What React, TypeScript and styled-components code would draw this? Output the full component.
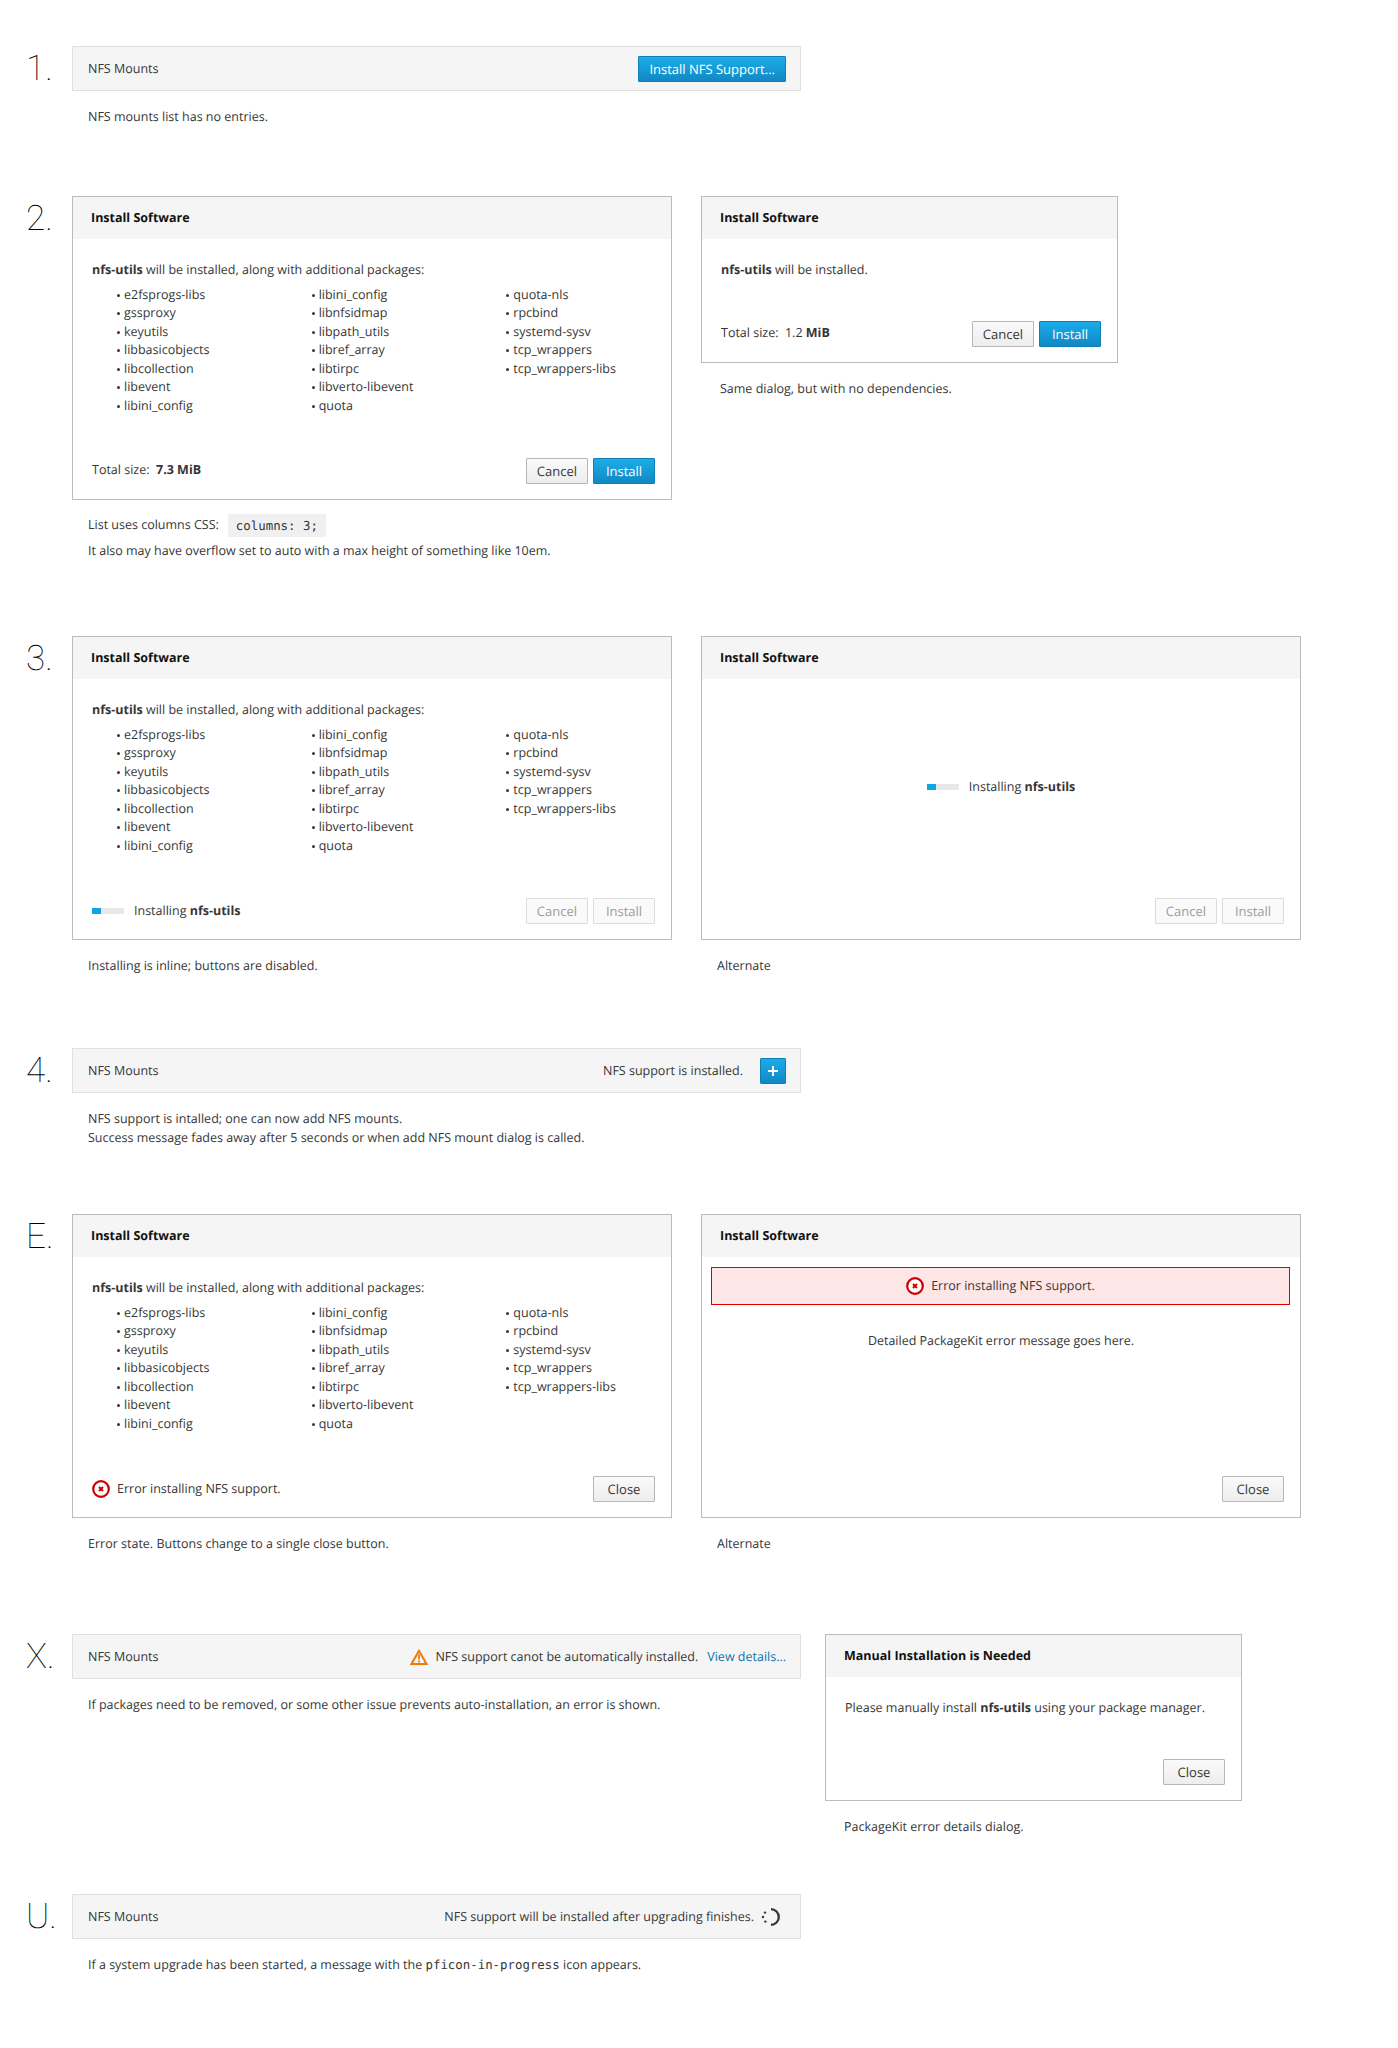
import React from "react";
import styled, { createGlobalStyle } from "styled-components";

const GlobalStyle = createGlobalStyle`
  html, body {
    margin: 0;
    padding: 0;
    background: #fff;
    color: #363636;
    font-family: "Open Sans", "Liberation Sans", sans-serif;
    font-size: 12.5px;
    line-height: 18.57px;
    text-rendering: geometricPrecision;
  }
`;

const PACKAGES = [
  "e2fsprogs-libs", "gssproxy", "keyutils", "libbasicobjects", "libcollection", "libevent", "libini_config",
  "libini_config", "libnfsidmap", "libpath_utils", "libref_array", "libtirpc", "libverto-libevent", "quota",
  "quota-nls", "rpcbind", "systemd-sysv", "tcp_wrappers", "tcp_wrappers-libs",
];

const ErrorIcon = () => (
  <svg width="18" height="18" viewBox="0 0 18 18" style={{ flex: "none" }}>
    <circle cx="9" cy="9" r="7.8" fill="#fff" stroke="#cc0000" strokeWidth="2.2" />
    <path d="M7 7l4 4M11 7l-4 4" stroke="#cc0000" strokeWidth="2" />
  </svg>
);

const WarningIcon = () => (
  <svg width="18" height="16" viewBox="0 0 18 16" style={{ flex: "none" }}>
    <path d="M9 1.8L1.5 15h15z" fill="none" stroke="#ec7a08" strokeWidth="2" strokeLinejoin="miter" />
    <path d="M9 5.6v5M9 11.6v1.8" stroke="#ec7a08" strokeWidth="1.8" />
  </svg>
);

const SpinnerIcon = () => (
  <svg width="19" height="18" viewBox="0 0 19 18" style={{ flex: "none", marginRight: 6 }}>
    <path d="M10 1.2A7.8 7.8 0 0 1 10 16.8" fill="none" stroke="#363636" strokeWidth="2.3" />
    <circle cx="4" cy="4.6" r="1.2" fill="#363636" />
    <circle cx="2" cy="9" r="1.2" fill="#363636" />
    <circle cx="4.4" cy="13.6" r="1.2" fill="#363636" />
  </svg>
);

const PlusIcon = () => (
  <svg width="12" height="12" viewBox="0 0 12 12">
    <path d="M6 1v10M1 6h10" stroke="#fff" strokeWidth="2" />
  </svg>
);

const Dialog = ({ width, height, title, children }: { width: number; height: number; title: string; children: React.ReactNode }) => (
  <DialogBox $width={width} $height={height}>
    <DialogHeader>{title}</DialogHeader>
    {children}
  </DialogBox>
);

const PackageBody = () => (
  <DialogBody>
    <p>
      <strong>nfs-utils</strong> will be installed, along with additional packages:
    </p>
    <PackageList>
      {PACKAGES.map((name, i) => (
        <li key={i}>{name}</li>
      ))}
    </PackageList>
  </DialogBody>
);

const Installing = () => (
  <InstallStatus>
    <ProgressTrack>
      <ProgressFill />
    </ProgressTrack>
    <span>
      Installing <strong>nfs-utils</strong>
    </span>
  </InstallStatus>
);

const Buttons = ({ disabled }: { disabled?: boolean }) => (
  <ButtonRow>
    <Button $disabled={disabled}>Cancel</Button>
    {disabled ? <Button $disabled>Install</Button> : <Button $primary>Install</Button>}
  </ButtonRow>
);

const App: React.FC = () => {
  return (
    <Page>
      <GlobalStyle />

      <Section $height={150}>
        <StepLabel>1.</StepLabel>
        <Column>
          <MountsBar>
            <BarTitle>NFS Mounts</BarTitle>
            <Button $primary>Install NFS Support...</Button>
          </MountsBar>
          <Note>NFS mounts list has no entries.</Note>
        </Column>
      </Section>

      <Section $height={440}>
        <StepLabel>2.</StepLabel>
        <Columns>
          <Column>
            <Dialog width={600} height={304} title="Install Software">
              <PackageBody />
              <DialogFooter>
                <FooterText>
                  Total size:&nbsp; <strong>7.3 MiB</strong>
                </FooterText>
                <Buttons />
              </DialogFooter>
            </Dialog>
            <Note>
              <CodeLine>
                List uses columns CSS: <CodeChip>columns: 3;</CodeChip>
              </CodeLine>
              It also may have overflow set to auto with a max height of something like 10em.
            </Note>
          </Column>
          <Column>
            <Dialog width={417} height={167} title="Install Software">
              <DialogBody>
                <p>
                  <strong>nfs-utils</strong> will be installed.
                </p>
              </DialogBody>
              <DialogFooter>
                <FooterText>
                  Total size:&nbsp; 1.2 <strong>MiB</strong>
                </FooterText>
                <Buttons />
              </DialogFooter>
            </Dialog>
            <Note $indent={19}>Same dialog, but with no dependencies.</Note>
          </Column>
        </Columns>
      </Section>

      <Section $height={412}>
        <StepLabel>3.</StepLabel>
        <Columns>
          <Column>
            <Dialog width={600} height={304} title="Install Software">
              <PackageBody />
              <DialogFooter>
                <Installing />
                <Buttons disabled />
              </DialogFooter>
            </Dialog>
            <Note>Installing is inline; buttons are disabled.</Note>
          </Column>
          <Column>
            <Dialog width={600} height={304} title="Install Software">
              <CenteredBody $top={99}>
                <Installing />
              </CenteredBody>
              <DialogFooter $end>
                <Buttons disabled />
              </DialogFooter>
            </Dialog>
            <Note>Alternate</Note>
          </Column>
        </Columns>
      </Section>

      <Section $height={166}>
        <StepLabel>4.</StepLabel>
        <Column>
          <MountsBar>
            <BarTitle>NFS Mounts</BarTitle>
            <BarStatus $gap={17}>
              NFS support is installed.
              <IconButton>
                <PlusIcon />
              </IconButton>
            </BarStatus>
          </MountsBar>
          <Note>
            NFS support is intalled; one can now add NFS mounts.
            <br />
            Success message fades away after 5 seconds or when add NFS mount dialog is called.
          </Note>
        </Column>
      </Section>

      <Section $height={420}>
        <StepLabel>E.</StepLabel>
        <Columns>
          <Column>
            <Dialog width={600} height={304} title="Install Software">
              <PackageBody />
              <DialogFooter>
                <InstallStatus $gap={7}>
                  <ErrorIcon />
                  Error installing NFS support.
                </InstallStatus>
                <Button>Close</Button>
              </DialogFooter>
            </Dialog>
            <Note>Error state. Buttons change to a single close button.</Note>
          </Column>
          <Column>
            <Dialog width={600} height={304} title="Install Software">
              <ErrorAlert>
                <ErrorIcon />
                Error installing NFS support.
              </ErrorAlert>
              <CenteredBody $top={27}>Detailed PackageKit error message goes here.</CenteredBody>
              <DialogFooter $end>
                <Button>Close</Button>
              </DialogFooter>
            </Dialog>
            <Note>Alternate</Note>
          </Column>
        </Columns>
      </Section>

      <Section $height={260}>
        <StepLabel>X.</StepLabel>
        <Columns $gap={24}>
          <Column>
            <MountsBar>
              <BarTitle>NFS Mounts</BarTitle>
              <BarStatus $gap={7}>
                <WarningIcon />
                <span>NFS support canot be automatically installed.</span>
                <DetailsLink>View details...</DetailsLink>
              </BarStatus>
            </MountsBar>
            <Note>If packages need to be removed, or some other issue prevents auto-installation, an error is shown.</Note>
          </Column>
          <Column>
            <Dialog width={417} height={167} title="Manual Installation is Needed">
              <DialogBody>
                <p>
                  Please manually install <strong>nfs-utils</strong> using your package manager.
                </p>
              </DialogBody>
              <DialogFooter $end>
                <Button>Close</Button>
              </DialogFooter>
            </Dialog>
            <Note $indent={19}>PackageKit error details dialog.</Note>
          </Column>
        </Columns>
      </Section>

      <Section $height={110}>
        <StepLabel>U.</StepLabel>
        <Column>
          <MountsBar>
            <BarTitle>NFS Mounts</BarTitle>
            <BarStatus $gap={7}>
              NFS support will be installed after upgrading finishes.
              <SpinnerIcon />
            </BarStatus>
          </MountsBar>
          <Note>
            If a system upgrade has been started, a message with the <InlineCode>pficon-in-progress</InlineCode> icon appears.
          </Note>
        </Column>
      </Section>
    </Page>
  );
};

const Page = styled.div`
  width: 1398px;
  height: 2048px;
  padding-top: 46px;
  box-sizing: border-box;
  overflow: hidden;
`;

const Section = styled.section<{ $height: number }>`
  display: flex;
  height: ${(p) => p.$height}px;
`;

const StepLabel = styled.div`
  flex: none;
  width: 72px;
  box-sizing: border-box;
  padding-left: 26px;
  font-family: "Roboto", sans-serif;
  font-weight: 100;
  font-size: 35px;
  line-height: 46px;
  color: #000;
`;

const Columns = styled.div<{ $gap?: number }>`
  display: flex;
  align-items: flex-start;
  gap: ${(p) => p.$gap ?? 29}px;
`;

const Column = styled.div`
  display: flex;
  flex-direction: column;
`;

const MountsBar = styled.div`
  width: 729px;
  height: 45px;
  box-sizing: border-box;
  display: flex;
  align-items: center;
  justify-content: space-between;
  padding: 1px 14px 0 15px;
  background: #f5f5f5;
  border: 1px solid #e0e0e0;
`;

const BarTitle = styled.span`
  color: #363636;
`;

const BarStatus = styled.div<{ $gap: number }>`
  display: flex;
  align-items: center;
  gap: ${(p) => p.$gap}px;
`;

const DetailsLink = styled.a`
  margin-left: 2px;
  color: #0b74ad;
`;

const Note = styled.div<{ $indent?: number }>`
  margin-top: 17px;
  padding-left: ${(p) => p.$indent ?? 16}px;
  color: #363636;
`;

const CodeLine = styled.div`
  display: flex;
  align-items: center;
  gap: 9px;
  height: 23px;
  margin-bottom: 5px;
  margin-top: -3px;
`;

const CodeChip = styled.code`
  display: inline-block;
  padding: 0 8px;
  height: 23px;
  line-height: 23px;
  background: #f0f0f0;
  font-family: "DejaVu Sans Mono", monospace;
  font-size: 12.4px;
`;

const InlineCode = styled.code`
  font-family: "DejaVu Sans Mono", monospace;
  font-size: 12.4px;
`;

const DialogBox = styled.div<{ $width: number; $height: number }>`
  width: ${(p) => p.$width}px;
  height: ${(p) => p.$height}px;
  box-sizing: border-box;
  display: flex;
  flex-direction: column;
  border: 1px solid #bbbbbb;
`;

const DialogHeader = styled.div`
  flex: none;
  height: 42px;
  line-height: 41px;
  padding-left: 18px;
  background: #f5f5f5;
  color: #111;
  font-weight: 700;
`;

const DialogBody = styled.div`
  padding: 22px 19px 0;

  p {
    margin: 0;
  }
`;

const CenteredBody = styled.div<{ $top: number }>`
  display: flex;
  justify-content: center;
  padding-top: ${(p) => p.$top}px;
`;

const PackageList = styled.ul`
  list-style: none;
  margin: 6px 0 0;
  padding: 0 0 0 24px;
  height: 130px;
  width: 584px;
  columns: 3;
  column-gap: 0;
  column-fill: auto;

  li {
    position: relative;
    padding-left: 8px;
  }

  li::before {
    content: "";
    position: absolute;
    left: 1px;
    top: 8px;
    width: 3px;
    height: 3px;
    border-radius: 50%;
    background: #363636;
  }
`;

const DialogFooter = styled.div<{ $end?: boolean }>`
  margin-top: auto;
  display: flex;
  align-items: center;
  justify-content: ${(p) => (p.$end ? "flex-end" : "space-between")};
  padding: 0 16px 15px 19px;
`;

const FooterText = styled.span`
  margin-bottom: 1px;
`;

const ButtonRow = styled.div`
  display: flex;
  gap: 5px;
`;

const Button = styled.button<{ $primary?: boolean; $disabled?: boolean }>`
  height: 26px;
  min-width: 62px;
  box-sizing: border-box;
  padding: 0 10px;
  border-radius: 1px;
  font-family: inherit;
  font-size: 13px;
  line-height: 24px;
  text-rendering: inherit;
  border: 1px solid ${(p) => (p.$primary ? "#0e7fb5" : p.$disabled ? "#dcdcdc" : "#b7b7b7")};
  color: ${(p) => (p.$primary ? "#fff" : p.$disabled ? "#9c9c9c" : "#363636")};
  background: ${(p) =>
    p.$primary
      ? "linear-gradient(to bottom, #1cace9, #1089c4)"
      : p.$disabled
        ? "#fafafa"
        : "linear-gradient(to bottom, #fafafa, #ededed)"};
`;

const IconButton = styled.button`
  width: 26px;
  height: 26px;
  padding: 0;
  display: flex;
  align-items: center;
  justify-content: center;
  border: 1px solid #0e7fb5;
  border-radius: 1px;
  background: linear-gradient(to bottom, #1cace9, #1089c4);
`;

const InstallStatus = styled.div<{ $gap?: number }>`
  display: flex;
  align-items: center;
  gap: ${(p) => p.$gap ?? 10}px;
`;

const ProgressTrack = styled.div`
  width: 32px;
  height: 6px;
  background: #e8e8e8;
`;

const ProgressFill = styled.div`
  width: 9px;
  height: 100%;
  background: #0ea5e0;
`;

const ErrorAlert = styled.div`
  margin: 10px 10px 0 9px;
  height: 38px;
  box-sizing: border-box;
  display: flex;
  align-items: center;
  justify-content: center;
  gap: 7px;
  background: #ffe6e6;
  border: 1px solid #dd0000;
`;

export default App;
